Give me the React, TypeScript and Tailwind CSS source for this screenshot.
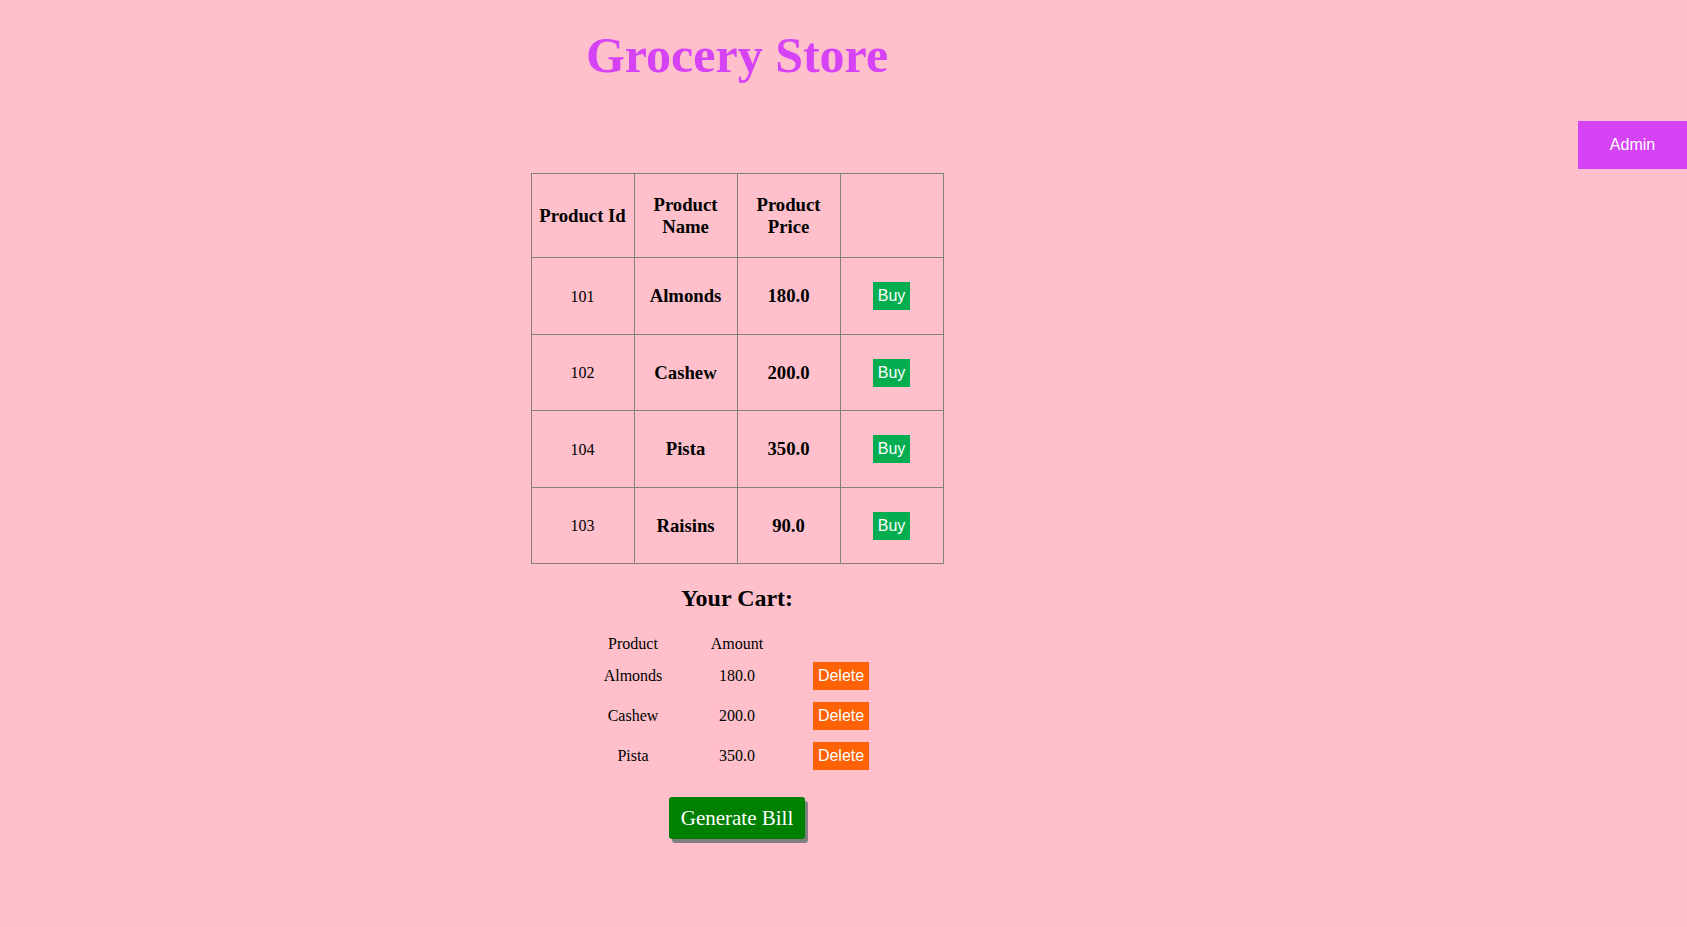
import React from "react";

// --- 商品データ ---
interface Product {
  id: number;
  name: string;
  price: string;
  h: string;
}

const products: Product[] = [
  { id: 101, name: "Almonds", price: "180.0", h: "h-[77px]" },
  { id: 102, name: "Cashew", price: "200.0", h: "h-[76px]" },
  { id: 104, name: "Pista", price: "350.0", h: "h-[77px]" },
  { id: 103, name: "Raisins", price: "90.0", h: "h-[76px]" },
];

const cart = [
  { name: "Almonds", amount: "180.0" },
  { name: "Cashew", amount: "200.0" },
  { name: "Pista", amount: "350.0" },
];

export default function App() {
  return (
    <div className="min-h-screen w-full bg-[#ffc0cb] flex justify-between font-['Liberation_Serif','Times_New_Roman',serif] text-black">
      <main className="w-[1474px] flex flex-col items-center">
        <h1 className="mt-[26px] text-[50px] leading-[58px] font-bold text-[#d642f5]">
          Grocery Store
        </h1>

        {/* 商品一覧 */}
        <table className="mt-[89px] w-[413px] table-fixed border-collapse">
          <thead>
            <tr>
              <th className="h-[84px] border border-[#808080] p-[1px] text-[18.72px] leading-[21.5px] font-bold">
                Product Id
              </th>
              <th className="border border-[#808080] p-[1px] text-[18.72px] leading-[21.5px] font-bold">
                Product
                <br />
                Name
              </th>
              <th className="border border-[#808080] p-[1px] text-[18.72px] leading-[21.5px] font-bold">
                Product
                <br />
                Price
              </th>
              <th className="border border-[#808080] p-[1px]"></th>
            </tr>
          </thead>
          <tbody>
            {products.map((p) => (
              <tr key={p.id}>
                <td className={`${p.h} border border-[#808080] p-[1px] pt-[2px] text-center text-[16px]`}>
                  {p.id}
                </td>
                <td className="border border-[#808080] p-[1px] pt-[2px] text-center text-[18.72px] font-bold">
                  {p.name}
                </td>
                <td className="border border-[#808080] p-[1px] pt-[2px] text-center text-[18.72px] font-bold">
                  {p.price}
                </td>
                <td className="border border-[#808080] p-[1px] text-center">
                  <button className="bg-[#03ad50] text-white px-[5px] py-[5px] text-[16px] leading-[18px] font-['Liberation_Sans',Arial,sans-serif]">
                    Buy
                  </button>
                </td>
              </tr>
            ))}
          </tbody>
        </table>

        {/* カート */}
        <h2 className="mt-[20px] text-[24px] leading-[28px] font-bold">Your Cart:</h2>

        <div className="mt-[20px] grid grid-cols-[104px_104px_104px] text-[16px] text-center">
          <div className="h-[24px] leading-[24px]">Product</div>
          <div className="h-[24px] leading-[24px]">Amount</div>
          <div className="h-[24px]"></div>
          {cart.map((c) => (
            <React.Fragment key={c.name}>
              <div className="h-[40px] flex items-center justify-center">{c.name}</div>
              <div className="h-[40px] flex items-center justify-center">{c.amount}</div>
              <div className="h-[40px] flex items-center justify-center">
                <button className="bg-[#ff6105] text-white px-[5px] py-[5px] text-[16px] leading-[18px] font-['Liberation_Sans',Arial,sans-serif]">
                  Delete
                </button>
              </div>
            </React.Fragment>
          ))}
        </div>

        <button className="mt-[21px] h-[42px] px-[12px] rounded-[3px] bg-[#008000] text-white text-[21px] leading-[24px] shadow-[3px_4px_0_#808080]">
          Generate Bill
        </button>
      </main>

      <button className="mt-[121px] w-[109px] h-[48px] self-start bg-[#d642f5] text-white text-[16px] font-['Liberation_Sans',Arial,sans-serif]">
        Admin
      </button>
    </div>
  );
}
